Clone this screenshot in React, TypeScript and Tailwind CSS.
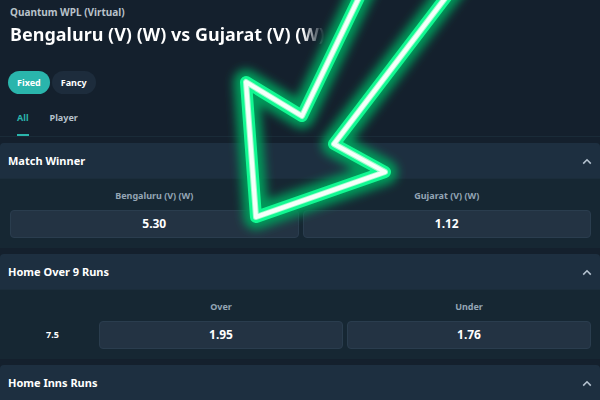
import React from "react";

type Outcome = { name: string; odds: string };
type Market = { title: string; line?: string; outcomes: Outcome[] };

const markets: Market[] = [
  {
    title: "Match Winner",
    outcomes: [
      { name: "Bengaluru (V) (W)", odds: "5.30" },
      { name: "Gujarat (V) (W)", odds: "1.12" },
    ],
  },
  {
    title: "Home Over 9 Runs",
    line: "7.5",
    outcomes: [
      { name: "Over", odds: "1.95" },
      { name: "Under", odds: "1.76" },
    ],
  },
  { title: "Home Inns Runs", outcomes: [] },
];

const ARROW = "M366 -17 L302 116 L246 82 L256 217 L385 172 L334 144 L459 -20";

const Chevron = () => (
  <svg
    className="w-2.5 h-2.5"
    viewBox="0 0 10 10"
    fill="none"
    stroke="#b4c2cf"
    strokeWidth="1.6"
    aria-hidden="true"
  >
    <path d="M1.2 6.6 L5 2.8 L8.8 6.6" />
  </svg>
);

const MarketCard = ({ market }: { market: Market }) => (
  <section className="rounded-t overflow-hidden bg-[#162733]">
    <h2>
      <button className="w-full h-9 px-2 pt-0.5 flex items-center justify-between bg-[#1d2f40] border-b border-[#1b2d3b] text-[11px] font-bold text-white">
        {market.title}
        <Chevron />
      </button>
    </h2>
    {market.outcomes.length > 0 && (
      <div className="flex items-end gap-1 pl-2.5 pr-[9px] pt-2 pb-2.5">
        {market.line && (
          <div className="w-[85px] h-7 shrink-0 flex items-center justify-center text-[9px] font-bold text-white">
            {market.line}
          </div>
        )}
        {market.outcomes.map((outcome) => (
          <div key={outcome.name} className="flex-1 text-center">
            <div className="h-[23px] text-[9px] leading-[18px] font-bold text-[#94a5b5]">
              {outcome.name}
            </div>
            <button className="w-full h-7 rounded bg-[#233343] border border-[#2a3d4e] text-xs font-bold text-white">
              {outcome.odds}
            </button>
          </div>
        ))}
      </div>
    )}
  </section>
);

const NeonArrow = () => (
  <svg
    className="absolute left-0 top-0 w-[600px] h-[400px] pointer-events-none"
    viewBox="0 0 600 400"
    fill="none"
    strokeLinejoin="round"
    aria-hidden="true"
  >
    <defs>
      <filter id="glow" x="-20%" y="-20%" width="140%" height="140%">
        <feGaussianBlur stdDeviation="5" />
      </filter>
      <filter id="soft" x="-20%" y="-20%" width="140%" height="140%">
        <feGaussianBlur stdDeviation="0.6" />
      </filter>
    </defs>
    <path d={ARROW} stroke="#009a5a" strokeWidth="25" filter="url(#glow)" />
    <path d={ARROW} stroke="#12f892" strokeWidth="12" />
    <path d={ARROW} stroke="#a5fbd0" strokeWidth="6" filter="url(#soft)" />
    <path d={ARROW} stroke="#f6fffa" strokeWidth="4" filter="url(#soft)" />
  </svg>
);

export default function App() {
  return (
    <main className="relative min-h-screen overflow-hidden bg-[#14202d] font-['Noto_Sans',sans-serif]">
      <header className="px-2.5 pt-1">
        <p className="text-[10px] leading-4 font-bold text-[#b9c2ca]">
          Quantum WPL (Virtual)
        </p>
        <h1 className="w-fit text-lg leading-7 font-bold whitespace-nowrap bg-linear-to-r from-white from-93% to-[#14202d] bg-clip-text text-transparent">
          Bengaluru (V) (W) vs Gujarat (V) (W)
        </h1>
      </header>
      <div className="flex gap-0.5 px-2 pt-[23px]">
        <button className="h-[23px] px-[9px] rounded-full bg-[#2ab5ac] text-[9px] font-bold text-white">
          Fixed
        </button>
        <button className="h-[23px] px-[9px] rounded-full bg-[#1d2c3c] text-[9px] font-bold text-white">
          Fancy
        </button>
      </div>
      <nav className="flex gap-[21px] px-[17px] pt-4 border-b border-[#1a2b38] text-[9px] leading-4 font-bold">
        <a href="#all" className="h-[26px] border-b-2 border-[#2ab5ac] text-[#2ab5ac]">
          All
        </a>
        <a href="#player" className="h-[26px] text-[#b6c1cb]">
          Player
        </a>
      </nav>
      <div className="flex flex-col gap-1.5 pt-1.5">
        {markets.map((market) => (
          <MarketCard key={market.title} market={market} />
        ))}
      </div>
      <NeonArrow />
    </main>
  );
}
